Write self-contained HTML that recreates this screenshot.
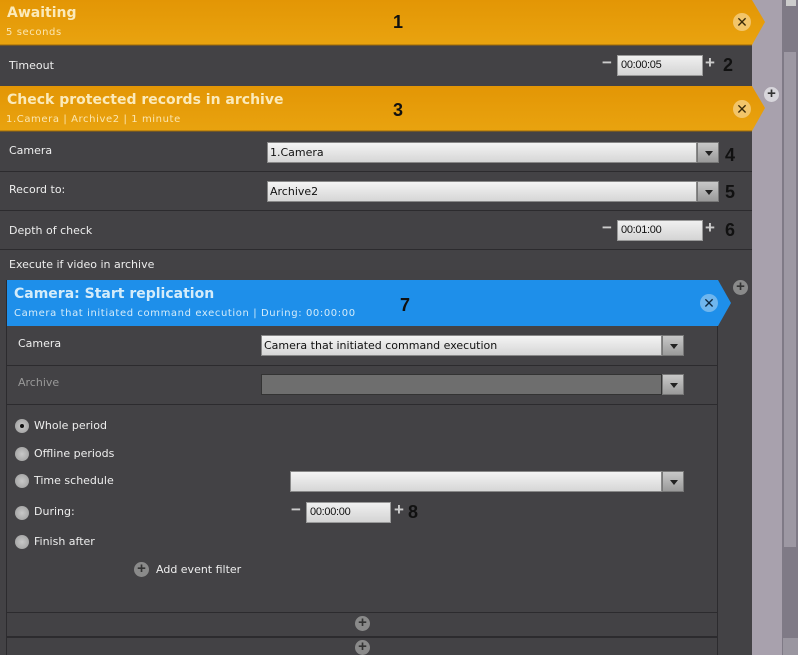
<!DOCTYPE html>
<html><head><meta charset="utf-8"><style>
*{margin:0;padding:0;box-sizing:border-box}
body{width:798px;height:655px;overflow:hidden;background:#434245;font-family:"Liberation Sans","DejaVu Sans",sans-serif;position:relative}
.a{position:absolute}
.t{position:absolute;color:#eee;font-size:11px;font-family:"DejaVu Sans",sans-serif;white-space:nowrap}
.ttl{position:absolute;color:#fbeaba;font-weight:bold;font-size:14px;font-family:"DejaVu Sans",sans-serif;white-space:nowrap}
.sub{position:absolute;color:#fbe6b0;font-size:10px;letter-spacing:0.6px;font-family:"DejaVu Sans",sans-serif;white-space:nowrap}
.num{position:absolute;color:#111;font-weight:bold;font-size:18px}
.line{position:absolute;height:1px;background:#2c2b2e}
.dd{position:absolute;background:linear-gradient(#f4f4f4,#d6d6d6);border:1px solid #888;font-size:11px;color:#111;padding:3px 0 0 2px;font-family:"DejaVu Sans",sans-serif;white-space:nowrap}
.btn{position:absolute;background:linear-gradient(#c8c8c8,#9a9a9a);border:1px solid #777}
.btn:after{content:"";position:absolute;left:7px;top:8px;border:4px solid transparent;border-top:5px solid #222}
.tf{position:absolute;background:linear-gradient(#f0f0f0,#d4d4d4);border:1px solid #999;font-size:11px;color:#111;padding:3px 0 0 3px;font-family:"Liberation Sans",sans-serif;letter-spacing:-0.3px}
.pm{position:absolute;color:#ccc;font-weight:bold;font-size:17px}
.x{position:absolute;width:18px;height:18px;border-radius:50%;text-align:center;font-weight:bold;font-size:14px;line-height:18px}
.plus{position:absolute;width:15px;height:15px;border-radius:50%;background:#8a8a8a;color:#333;font-weight:bold;text-align:center;font-size:15px;line-height:14px}
.rad{position:absolute;width:14px;height:14px;border-radius:50%;background:radial-gradient(#c8c8c8,#9a9a9a)}
</style></head><body>
<div class="a" style="left:752px;top:0;width:31px;height:655px;background:#a8a1ad"></div>
<div class="a" style="left:782px;top:0;width:16px;height:655px;background:#7f7a86"></div>
<div class="a" style="left:784px;top:52px;width:12px;height:495px;background:#9d98a3"></div>
<div class="a" style="left:783px;top:638px;width:15px;height:17px;background:#9a96a0"></div>
<div class="a" style="left:786px;top:0;width:10px;height:6px;background:#ccc"></div>
<svg class="a" style="left:0;top:0" width="770" height="135">
<defs><linearGradient id="g" x1="0" y1="0" x2="0" y2="1"><stop offset="0" stop-color="#e39605"/><stop offset="1" stop-color="#e9a30f"/></linearGradient></defs>
<polygon points="0,0 752,0 765,22 752,45 0,45" fill="url(#g)"/>
<line x1="0" y1="45" x2="752" y2="45" stroke="#9c6a0a"/>
<polygon points="0,86 752,86 765,108 752,131 0,131" fill="url(#g)"/>
<line x1="0" y1="131" x2="752" y2="131" stroke="#9c6a0a"/>
</svg>
<div class="ttl" style="left:7px;top:5px">Awaiting</div>
<div class="sub" style="left:6px;top:27px">5 seconds</div>
<div class="num" style="left:393px;top:12px">1</div>
<div class="x" style="left:733px;top:13px;background:#f2c56a;color:#3a2a08">✕</div>
<div class="t" style="left:9px;top:59px">Timeout</div>
<div class="pm" style="left:602px;top:53px">−</div>
<div class="tf" style="left:617px;top:55px;width:86px;height:21px">00:00:05</div>
<div class="pm" style="left:705px;top:53px">+</div>
<div class="num" style="left:723px;top:55px">2</div>
<div class="plus" style="left:764px;top:87px;background:#d8d6dc">+</div>
<div class="ttl" style="left:7px;top:92px">Check protected records in archive</div>
<div class="sub" style="left:6px;top:114px">1.Camera | Archive2 | 1 minute</div>
<div class="num" style="left:393px;top:100px">3</div>
<div class="x" style="left:733px;top:100px;background:#f2c56a;color:#3a2a08">✕</div>
<div class="t" style="left:9px;top:144px">Camera</div>
<div class="dd" style="left:267px;top:142px;width:430px;height:21px">1.Camera</div>
<div class="btn" style="left:697px;top:142px;width:22px;height:21px"></div>
<div class="num" style="left:725px;top:145px">4</div>
<div class="line" style="left:0;top:171px;width:752px"></div>
<div class="t" style="left:9px;top:183px">Record to:</div>
<div class="dd" style="left:267px;top:181px;width:430px;height:21px">Archive2</div>
<div class="btn" style="left:697px;top:181px;width:22px;height:21px"></div>
<div class="num" style="left:725px;top:182px">5</div>
<div class="line" style="left:0;top:210px;width:752px"></div>
<div class="t" style="left:9px;top:224px">Depth of check</div>
<div class="pm" style="left:602px;top:218px">−</div>
<div class="tf" style="left:617px;top:220px;width:86px;height:21px">00:01:00</div>
<div class="pm" style="left:705px;top:218px">+</div>
<div class="num" style="left:725px;top:220px">6</div>
<div class="line" style="left:0;top:249px;width:752px"></div>
<div class="t" style="left:9px;top:258px">Execute if video in archive</div>
<div class="a" style="left:6px;top:280px;width:1px;height:375px;background:#2c2b2e"></div>
<div class="a" style="left:717px;top:326px;width:1px;height:329px;background:#2c2b2e"></div>
<svg class="a" style="left:0;top:278px" width="740" height="50">
<polygon points="7,2 718,2 731,25 718,48 7,48" fill="#1e8fea"/>
</svg>
<div class="plus" style="left:733px;top:280px">+</div>
<div class="ttl" style="left:14px;top:286px;color:#d4ecfa">Camera: Start replication</div>
<div class="sub" style="left:14px;top:308px;color:#d4ecfa">Camera that initiated command execution | During: 00:00:00</div>
<div class="num" style="left:400px;top:295px">7</div>
<div class="x" style="left:700px;top:294px;background:#6fb6ee;color:#0c2840">✕</div>
<div class="t" style="left:18px;top:337px">Camera</div>
<div class="dd" style="left:261px;top:335px;width:401px;height:21px">Camera that initiated command execution</div>
<div class="btn" style="left:662px;top:335px;width:22px;height:21px"></div>
<div class="line" style="left:7px;top:365px;width:710px"></div>
<div class="t" style="left:18px;top:376px;color:#999">Archive</div>
<div class="a" style="left:261px;top:374px;width:401px;height:21px;background:#6e6e6e;border:1px solid #333"></div>
<div class="btn" style="left:662px;top:374px;width:22px;height:21px"></div>
<div class="line" style="left:7px;top:404px;width:710px"></div>
<div class="rad" style="left:15px;top:419px"></div>
<div class="a" style="left:20px;top:424px;width:4px;height:4px;border-radius:50%;background:#111"></div>
<div class="t" style="left:34px;top:419px">Whole period</div>
<div class="rad" style="left:15px;top:447px"></div>
<div class="t" style="left:34px;top:447px">Offline periods</div>
<div class="rad" style="left:15px;top:474px"></div>
<div class="t" style="left:34px;top:474px">Time schedule</div>
<div class="dd" style="left:290px;top:471px;width:372px;height:21px"></div>
<div class="btn" style="left:662px;top:471px;width:22px;height:21px"></div>
<div class="rad" style="left:15px;top:506px"></div>
<div class="t" style="left:34px;top:505px">During:</div>
<div class="pm" style="left:291px;top:500px">−</div>
<div class="tf" style="left:306px;top:502px;width:85px;height:21px">00:00:00</div>
<div class="pm" style="left:394px;top:500px">+</div>
<div class="num" style="left:408px;top:502px">8</div>
<div class="rad" style="left:15px;top:535px"></div>
<div class="t" style="left:34px;top:535px">Finish after</div>
<div class="plus" style="left:134px;top:562px">+</div>
<div class="t" style="left:156px;top:563px">Add event filter</div>
<div class="line" style="left:7px;top:612px;width:710px"></div>
<div class="plus" style="left:355px;top:616px">+</div>
<div class="line" style="left:7px;top:636px;width:710px;height:2px"></div>
<div class="plus" style="left:355px;top:640px">+</div>
</body></html>
